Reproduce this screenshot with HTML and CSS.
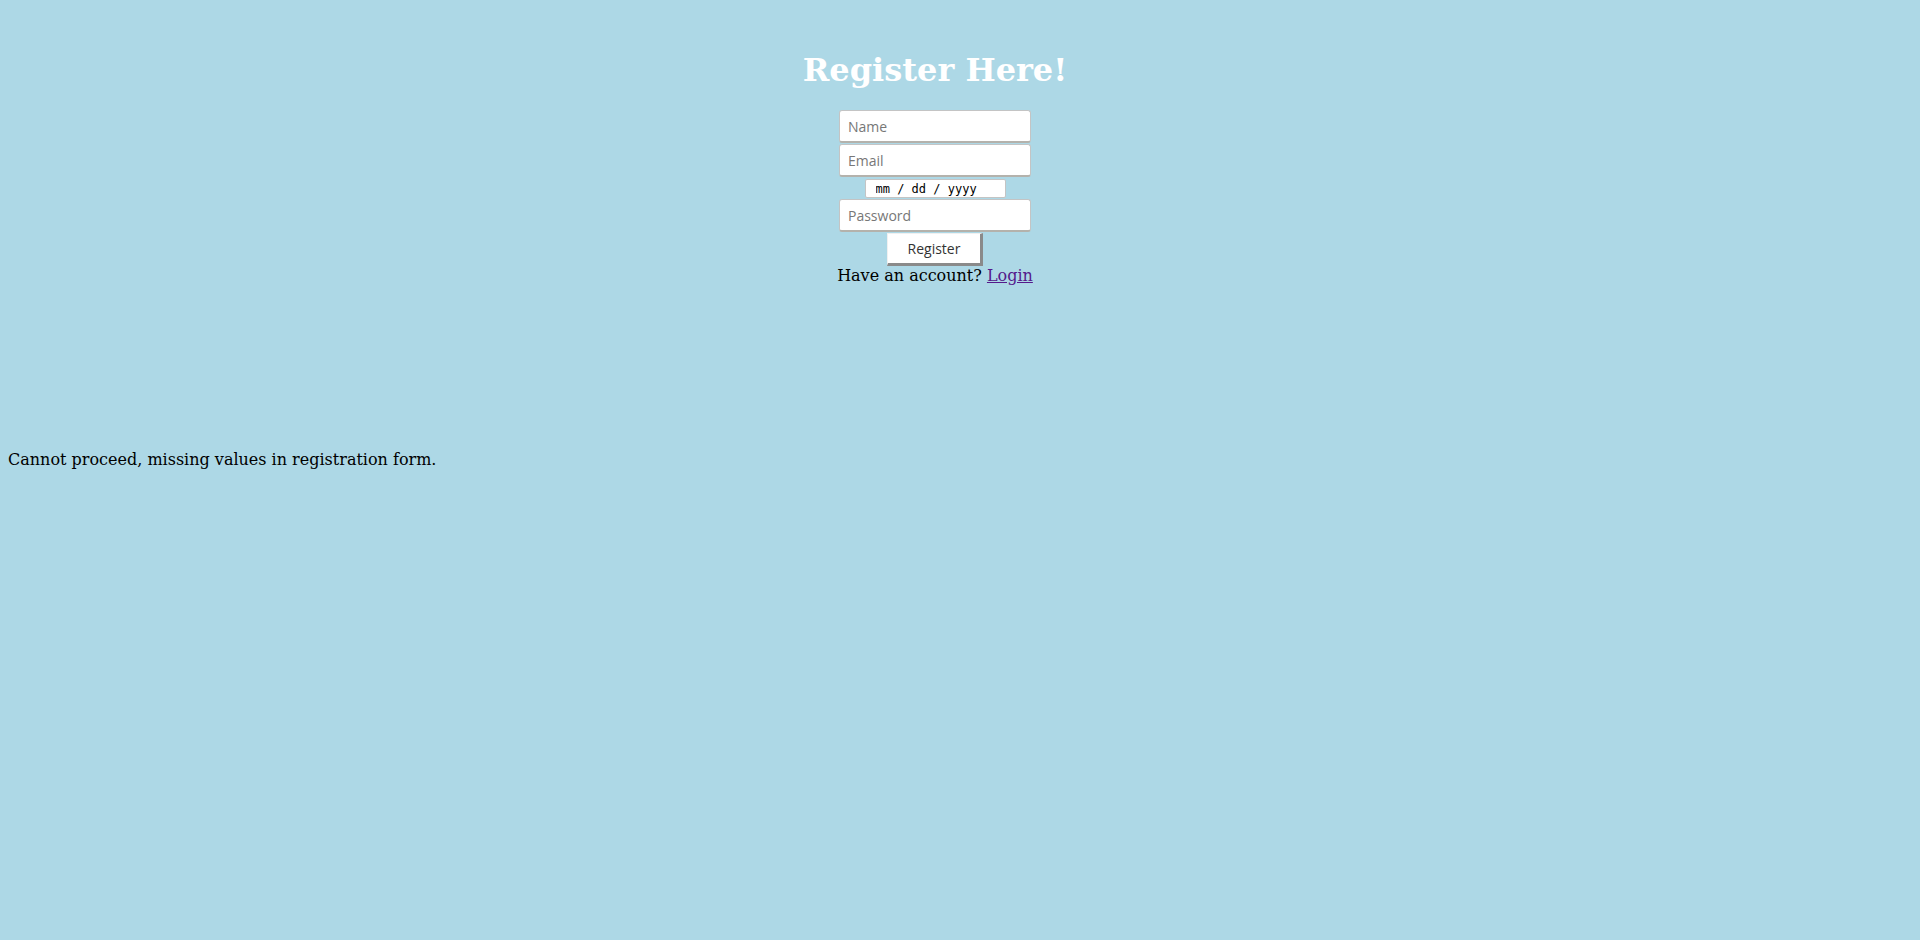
FILE: index.html
```html
<!DOCTYPE html>
<html>
<head>
<meta charset="utf-8">
<link rel="stylesheet" href="styles.css">
</head>
<body>
<div class="page">
  <div class="center">
    <h1 class="title">Register Here!</h1>
    <form class="form">
      <input class="field" type="text" placeholder="Name">
      <input class="field" type="email" placeholder="Email">
      <input class="date" type="text" placeholder="mm / dd / yyyy">
      <input class="field" type="password" placeholder="Password">
      <button class="btn" type="button">Register</button>
      <p class="account">Have an account? <a class="link" href="#">Login</a></p>
    </form>
  </div>
  <p class="error">Cannot proceed, missing values in registration form.</p>
</div>
</body>
</html>
```
FILE: styles.css
```css
html, body {
  margin: 0;
  background: #add8e6;
}
.page {
  padding: 8px;
  font-family: "DejaVu Serif", serif;
  font-size: 16px;
  color: #000;
}
.center {
  margin-right: 50px;
}
.title {
  margin: 39px 0 0;
  text-align: center;
  color: #fff;
  font-size: 32px;
  font-weight: bold;
  line-height: 46px;
}
.form {
  display: flex;
  flex-direction: column;
  align-items: center;
  margin-top: 17px;
}
.field {
  box-sizing: border-box;
  width: 192px;
  height: 33px;
  margin: 0 0 1px;
  padding: 0 8px;
  border: 1px solid #c4c4c4;
  border-bottom: 2px solid #b4b2ac;
  border-radius: 3px;
  background: #fff;
  font-family: "Open Sans", sans-serif;
  font-size: 14px;
  color: #333;
}
.field::placeholder {
  color: #777;
}
.date {
  box-sizing: border-box;
  width: 141px;
  height: 19px;
  margin: 1px 0 1px;
  padding: 0 0 0 10px;
  border: 1px solid #c4c4c4;
  border-radius: 2px;
  background: #fff;
  font-family: "DejaVu Sans Mono", monospace;
  font-size: 12px;
}
.date::placeholder {
  color: #000;
}
.btn {
  box-sizing: border-box;
  width: 96px;
  height: 33px;
  margin: 0;
  border: 1px solid #f0f0f0;
  border-right: 3px solid #8a8a8a;
  border-bottom: 3px solid #8a8a8a;
  background: #fff;
  font-family: "Open Sans", sans-serif;
  font-size: 14px;
  color: #333;
}
.account {
  margin: 0;
  line-height: 20px;
}
.link {
  color: #551a8b;
}
.error {
  margin: 164px 0 0;
}
```
